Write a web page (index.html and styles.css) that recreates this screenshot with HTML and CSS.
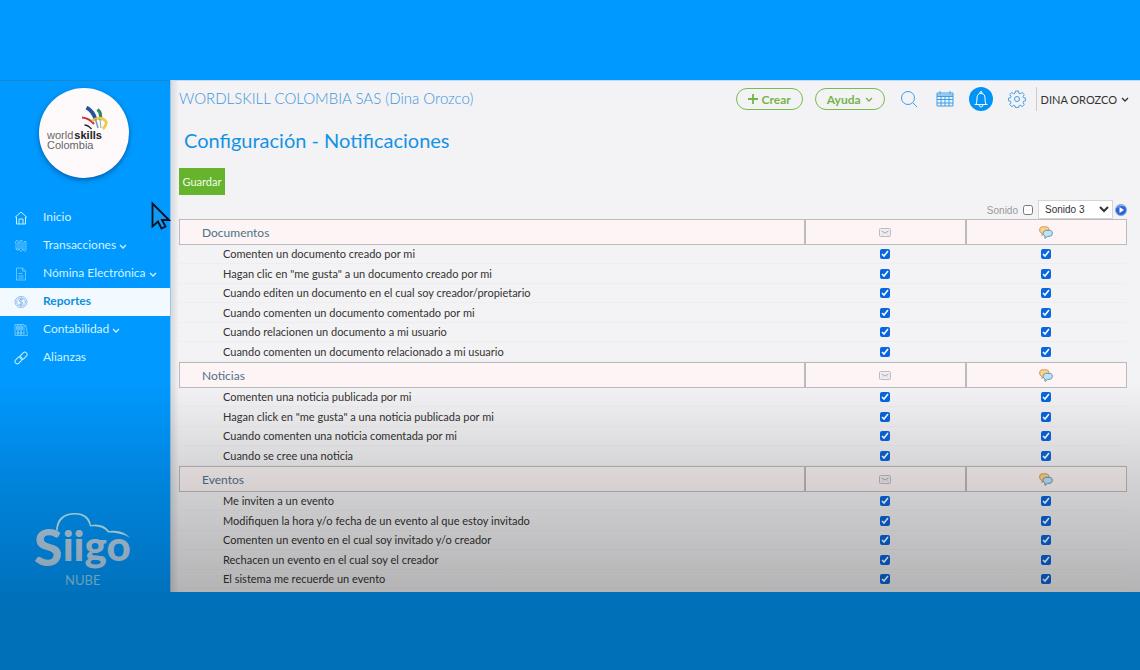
FILE: index.html
```html
<!DOCTYPE html>
<html lang="es">
<head>
<meta charset="utf-8">
<meta name="viewport" content="width=device-width, initial-scale=1">
<title>Configuración - Notificaciones</title>
<link rel="stylesheet" href="styles.css">
</head>
<body>
<svg class="defs" aria-hidden="true">
  <symbol id="mail" viewBox="0 0 12 9"><rect x=".5" y=".5" width="11" height="8" rx="1" fill="#f1eef2" stroke="#bdbbc1"/><path d="M2.500 3 6 5l3.500-2" fill="none" stroke="#aaa8b0"/><path d="m2 7.500 2.500-2m5.500 2-2.500-2" stroke="#cfccd3" stroke-width=".7"/></symbol>
  <symbol id="chat" viewBox="0 0 14 13"><path d="M3 .8h4.500Q10 1 10 4t-2.500 3.500H5L3 9.500V7.400Q.6 7 .6 4T3 .8z" fill="#fbd28c" stroke="#df9858"/><path d="M6.500 4.300h4.700Q13.400 5 13.400 7.300T11 10.300H8.700L6 12.400V10Q4 9.300 4 7.300t2.500-3z" fill="#bfe2f5" stroke="#5d94b8"/></symbol>
  <symbol id="chev" viewBox="0 0 8 5"><path d="m1 1 3 3 3-3" fill="none" stroke="currentColor" stroke-width="1.300"/></symbol>
</svg>
<div class="band band-top"></div>
<div class="screen">
  <aside class="sidebar">
    <div class="brand">
      <svg class="hand" viewBox="0 0 27 24" fill="none" aria-hidden="true">
        <path d="M5.500 1.500Q12 5 14.500 13" stroke="#23539b" stroke-width="3.800"/>
        <path d="M16.500 3.500Q21 7 19 14" stroke="#2c8a5c" stroke-width="3.200"/>
        <path d="M1 11.500Q8 12 13 18" stroke="#cf3038" stroke-width="2.200"/>
        <path d="M3.500 19Q7 19 10.500 23" stroke="#222" stroke-width="1.300"/>
        <path d="M11 15Q20 9 25 15.500 26 19 22 23" stroke="#efc94d" stroke-width="2.800"/>
        <path d="M14.500 13 17 22" stroke="#7898c4" stroke-width="1.500"/><path d="m19 14 1 8" stroke="#8aae9a"/>
      </svg>
      <span class="brand-name">world <b>skills</b></span>
      <span class="brand-name">Colombia</span>
    </div>
    <nav class="menu">
      <a href="#"><svg class="ico" viewBox="0 0 14 14"><path d="M1 6.500 7 1l6 5.500M2.500 6v7h9V6M5 13V8h4v5"/></svg><span>Inicio</span></a>
      <a href="#"><svg class="ico dim" viewBox="0 0 14 14"><path d="M3 1 1 3.500h1V10h2V3.500h1zM2 10l1.500 1.500L5 10M6 1.500h2V10h1l-2 2.500L5 10h1zM10 2.500h2V11l-1 1.500L9.500 11H10z"/></svg><span>Transacciones</span><svg class="chev"><use href="#chev"/></svg></a>
      <a href="#"><svg class="ico dim" viewBox="0 0 14 14"><path d="M2.500 1h6l3 3v9h-9zM8.500 1v3h3M4.500 6.500h4M4.500 9h5M4.500 11h5"/></svg><span>Nómina Electrónica</span><svg class="chev"><use href="#chev"/></svg></a>
      <a href="#" class="active"><svg class="ico" viewBox="0 0 14 14"><ellipse cx="7" cy="7" rx="6" ry="5.500"/><ellipse cx="7" cy="7" rx="4.300" ry="4"/><path d="M9 5Q7 3.800 5.500 5T7 7t1.500 2T5 9M7 3v8"/></svg><span>Reportes</span></a>
      <a href="#"><svg class="ico dim" viewBox="0 0 14 14"><path d="M1 1.500h3v11H1zM4 1.500h3v11H4zM7 1.500h3v11H7zM10 3l2-.5 1.500 10h-3M1 10h9M2.500 3v4M5.500 3v4M8.500 3v4"/></svg><span>Contabilidad</span><svg class="chev"><use href="#chev"/></svg></a>
      <a href="#"><svg class="ico" viewBox="0 0 14 14"><rect x="5.500" y="2.500" width="8" height="4.500" rx="2.200" transform="rotate(-45 9.500 4.700)"/><rect x=".5" y="7" width="8" height="4.500" rx="2.200" transform="rotate(-45 4.500 9.200)"/></svg><span>Alianzas</span></a>
    </nav>
    <svg class="siigo" viewBox="0 0 100 78" role="img" aria-label="Siigo Nube">
      <path d="M21 19Q22 2 40 2q14 0 16 12 12-2 18 6 14-2 21 7-8-5.500-22-5.500-6-7.500-18-6Q52 3.500 40 3.500 24 3.500 22.500 20z" fill="#bfeef8"/>
      <text x="-1" y="55"><tspan class="siigo-s">S</tspan><tspan class="siigo-rest" y="50">iigo</tspan></text>
      <text x="30" y="74" class="siigo-sub">NUBE</text>
    </svg>
  </aside>
  <main class="main">
    <header class="topbar">
      <div class="company">WORDLSKILL COLOMBIA SAS (Dina Orozco)</div>
      <div class="tools">
        <button class="pill" type="button"><svg class="plus" viewBox="0 0 10 10"><path d="M5 0v10M0 5h10" stroke="currentColor" stroke-width="1.800"/></svg>Crear</button>
        <button class="pill" type="button">Ayuda<svg class="chev"><use href="#chev"/></svg></button>
        <div class="icons">
        <button class="tool" type="button" aria-label="Buscar"><svg viewBox="0 0 18 18"><circle cx="8" cy="8" r="6.500"/><path d="m13 13 4 4"/></svg></button>
        <button class="tool" type="button" aria-label="Calendario"><svg viewBox="0 0 18 18"><path d="M1 3h16v13H1zM1 6.500h16M1 9.500h16M1 13h16M5 6.500V16M9 6.500V16M13 6.500V16M4 1v3M14 1v3M1 5h16"/></svg></button>
        <button class="tool bell" type="button" aria-label="Notificaciones"><svg viewBox="0 0 18 18"><path d="M2.500 14.500h13M4 14.500q1-2 1-6.500 0-4.500 4-4.500T13 8q0 4.500 1 6.500M8 3.500q-.5-2 1-2t1 2M7 15q.3 2 2 2t2-2"/></svg></button>
        <button class="tool" type="button" aria-label="Ajustes"><svg viewBox="0 0 18 18"><circle cx="9" cy="9" r="2.500"/><path d="m7.500 1h3l.4 2.200 1.400.6 1.900-1.300 2.100 2.100L15 6.500l.6 1.300 2 .4v2.600l-2 .4-.6 1.400 1.300 1.900-2.100 2.100-1.900-1.300-1.400.6-.4 1.700h-3L7 15.900l-1.300-.6-1.900 1.300-2.100-2.100L3 12.600l-.6-1.400-2-.4V8.200l2-.4L3 6.500 1.700 4.600l2.100-2.100 1.900 1.300L7 3.200z"/></svg></button>
        </div>
        <button class="user" type="button">DINA OROZCO<svg class="chev"><use href="#chev"/></svg></button>
      </div>
    </header>
    <h1>Configuración - Notificaciones</h1>
    <button class="save" type="button">Guardar</button>
    <div class="sound">
      <label for="snd">Sonido</label><input id="snd" type="checkbox">
      <select aria-label="Sonido"><option>Sonido 3</option></select>
      <button class="play" type="button" aria-label="Reproducir"><svg viewBox="0 0 12 12"><circle cx="6" cy="6" r="5.500" fill="#2d63d2" stroke="#86a7e6"/><path d="M1.500 4Q4 .5 9 2" fill="none" stroke="#9fc0f5"/><path d="m4.500 3 4.500 3-4.500 3z" fill="#fff"/></svg></button>
    </div>
    <table class="grid" id="grid"></table>
  </main>
  <svg class="cursor" viewBox="0 0 20 28" aria-hidden="true"><path d="M1.500 1.500v23l5.500-5 3.500 7 4-2-3.500-6.500h7z" fill="#1398f2" stroke="#06121f" stroke-width="1.800"/></svg>
  <div class="shade"></div>
</div>
<div class="band band-bottom"></div>
<script src="app.js"></script>
</body>
</html>
```
FILE: styles.css
```css
* { box-sizing: border-box; }
body {
  margin: 0;
  min-height: 100vh;
  display: flex;
  flex-direction: column;
  background: #0099ff;
  font-family: Lato, "Noto Sans", sans-serif;
  font-size: 11px;
  color: #333;
}
button, select { font: inherit; color: inherit; }
button { background: none; border: 0; padding: 0; }
a { color: inherit; text-decoration: none; }
.defs { position: absolute; width: 0; height: 0; }
.band-top { height: 80px; }
.band-bottom { height: 78px; background: linear-gradient(#0070ba, #0071b8); }
.screen { position: relative; flex: 1; display: flex; }
.shade {
  position: absolute;
  inset: 0;
  pointer-events: none;
  background: linear-gradient(transparent 59%, rgba(0, 0, 0, 0.13) 77%, rgba(0, 0, 0, 0.26));
}
.chev { width: 8px; height: 5px; flex: none; }

.sidebar {
  width: 170px;
  flex: none;
  display: flex;
  flex-direction: column;
  background: #0099ff;
  border-top: 1px solid #1c86cf;
  color: #d3f2ff;
}
.brand {
  width: 90px;
  height: 90px;
  margin: 7px 0 0 39px;
  padding: 18px 0 0 8px;
  border-radius: 50%;
  background: #fefafb;
  box-shadow: 0 2px 5px rgba(0, 40, 90, 0.5);
  display: flex;
  flex-direction: column;
}
.hand { width: 27px; height: 24px; margin-left: 34px; }
.brand-name { font: 11px/10px "Liberation Sans", sans-serif; color: #666; white-space: nowrap; }
.brand-name b { color: #222; margin-left: -2px; }

.menu { margin-top: 26px; }
.menu a {
  height: 28px;
  padding-left: 14px;
  display: flex;
  align-items: center;
  font-size: 12px;
}
.menu span { margin-left: 15px; line-height: 14px; padding-bottom: 2px; }
.menu .chev { margin-left: 3px; }
.menu .active { background: #f3faff; color: #0b8fe0; font-weight: 700; }
.ico { width: 14px; height: 14px; fill: none; stroke: #c5efff; }
.dim { stroke: #7fd0fb; stroke-width: 0.8; }
.active .ico { stroke: #7aaee8; stroke-width: 0.8; }
.siigo { width: 100px; height: 78px; margin: auto 0 3px 35px; fill: #b9d6ee; }
.siigo-s { font: 900 52px Lato, sans-serif; }
.siigo-rest { font: 900 42px Lato, sans-serif; }
.siigo-sub { font: 13px Lato, sans-serif; fill: #8ad2f5; }

.main {
  flex: 1;
  min-width: 0;
  padding: 0 13px 0 8px;
  display: flex;
  flex-direction: column;
  align-items: flex-start;
  background: linear-gradient(90deg, #d8d9de, #f3f2f4 8px);
  border-left: 1px solid #9cc4e4;
  border-top: 1px solid #c8d9ee;
}
.topbar { width: 100%; height: 36px; display: flex; align-items: center; justify-content: space-between; }
.company { font-size: 15px; line-height: 18px; padding-bottom: 2px; font-weight: 300; color: #3d96de; }
.tools { display: flex; align-items: center; gap: 12px; }
.pill {
  height: 22px;
  padding: 0 11px;
  display: flex;
  align-items: center;
  gap: 4px;
  border: 1px solid #78bd4e;
  border-radius: 11px;
  color: #72b64a;
  font-size: 12px;
  font-weight: 700;
}
.plus { width: 10px; height: 10px; }
.icons { display: flex; gap: 12px; }
.tool { width: 24px; height: 24px; display: grid; place-items: center; border-radius: 50%; }
.tool svg { width: 18px; height: 18px; fill: none; stroke: #3d9fea; }
.bell { background: #0093f8; }
.bell svg { stroke: #fff; }
.user {
  height: 24px;
  padding-left: 4px;
  display: flex;
  align-items: center;
  gap: 4px;
  border-left: 1px solid #ccc;
  margin-left: -5px;
  margin-right: -2px;
}
h1 { margin: 11px 0 0 5px; font-size: 20px; line-height: 24px; font-weight: 400; color: #1492e6; }
.save { height: 27px; margin-top: 16px; width: 46px; background: #66b32e; color: #f2ffe8; }
.sound { align-self: flex-end; display: flex; align-items: center; height: 19px; margin-top: 5px; color: #999; }
.sound label { font: 10px/12px "Liberation Sans", sans-serif; padding-top: 2px; }
.sound input { margin: 0 5px; width: 10px; height: 10px; }
.sound select {
  width: 75px;
  height: 19px;
  padding: 0 0 0 2px;
  border: 1px solid #d5d5d5;
  background: #fff;
  color: #333;
  font: 10px "Liberation Sans", sans-serif;
}
.play { width: 12px; height: 12px; margin-left: 2px; display: grid; }

.grid { width: 100%; table-layout: fixed; border-spacing: 0; }
.label-col { width: 66%; }
.grid th {
  height: 26px;
  padding: 0;
  border: 1px solid #bdbabb;
  background: #fcf4f5;
  font-weight: 400;
}
.grid th:first-child { padding-left: 22px; text-align: left; font-size: 12px; color: #4f7288; }
.grid td { height: 19px; padding: 0; line-height: 14px; text-align: center; border-bottom: 1px solid #00000005; }
.grid tr:nth-child(odd) td { height: 20px; }
.grid td:first-child { padding-left: 44px; text-align: left; }
.grid th svg, .grid input { display: block; margin: 0 auto; }
.grid input { width: 10px; height: 10px; accent-color: #0866e0; }
.mail { width: 12px; height: 9px; }
.chat { width: 14px; height: 13px; }
.cursor { position: absolute; left: 151px; top: 121px; width: 20px; height: 30px; }
```
FILE: app.js
```js
const groups = {
  "Documentos": [
    "Comenten un documento creado por mi",
    "Hagan clic en \"me gusta\" a un documento creado por mi",
    "Cuando editen un documento en el cual soy creador/propietario",
    "Cuando comenten un documento comentado por mi",
    "Cuando relacionen un documento a mi usuario",
    "Cuando comenten un documento relacionado a mi usuario"
  ],
  "Noticias": [
    "Comenten una noticia publicada por mi",
    "Hagan click en \"me gusta\" a una noticia publicada por mi",
    "Cuando comenten una noticia comentada por mi",
    "Cuando se cree una noticia"
  ],
  "Eventos": [
    "Me inviten a un evento",
    "Modifiquen la hora y/o fecha de un evento al que estoy invitado",
    "Comenten un evento en el cual soy invitado y/o creador",
    "Rechacen un evento en el cual soy el creador",
    "El sistema me recuerde un evento"
  ]
};
let html = '<colgroup><col class="label-col"><col><col></colgroup>';
let n = 0;
for (const [name, rows] of Object.entries(groups)) {
  html += `<tbody><tr><th scope="col">${name}</th><th scope="col" aria-label="Correo"><svg class="mail"><use href="#mail"/></svg></th><th scope="col" aria-label="Mensaje"><svg class="chat"><use href="#chat"/></svg></th></tr>`;
  for (const text of rows) {
    n++;
    html += `<tr><td><span id="r${n}">${text}</span></td><td><input type="checkbox" checked aria-labelledby="r${n}"></td><td><input type="checkbox" checked aria-labelledby="r${n}"></td></tr>`;
  }
  html += "</tbody>";
}
document.getElementById("grid").innerHTML = html;
```
